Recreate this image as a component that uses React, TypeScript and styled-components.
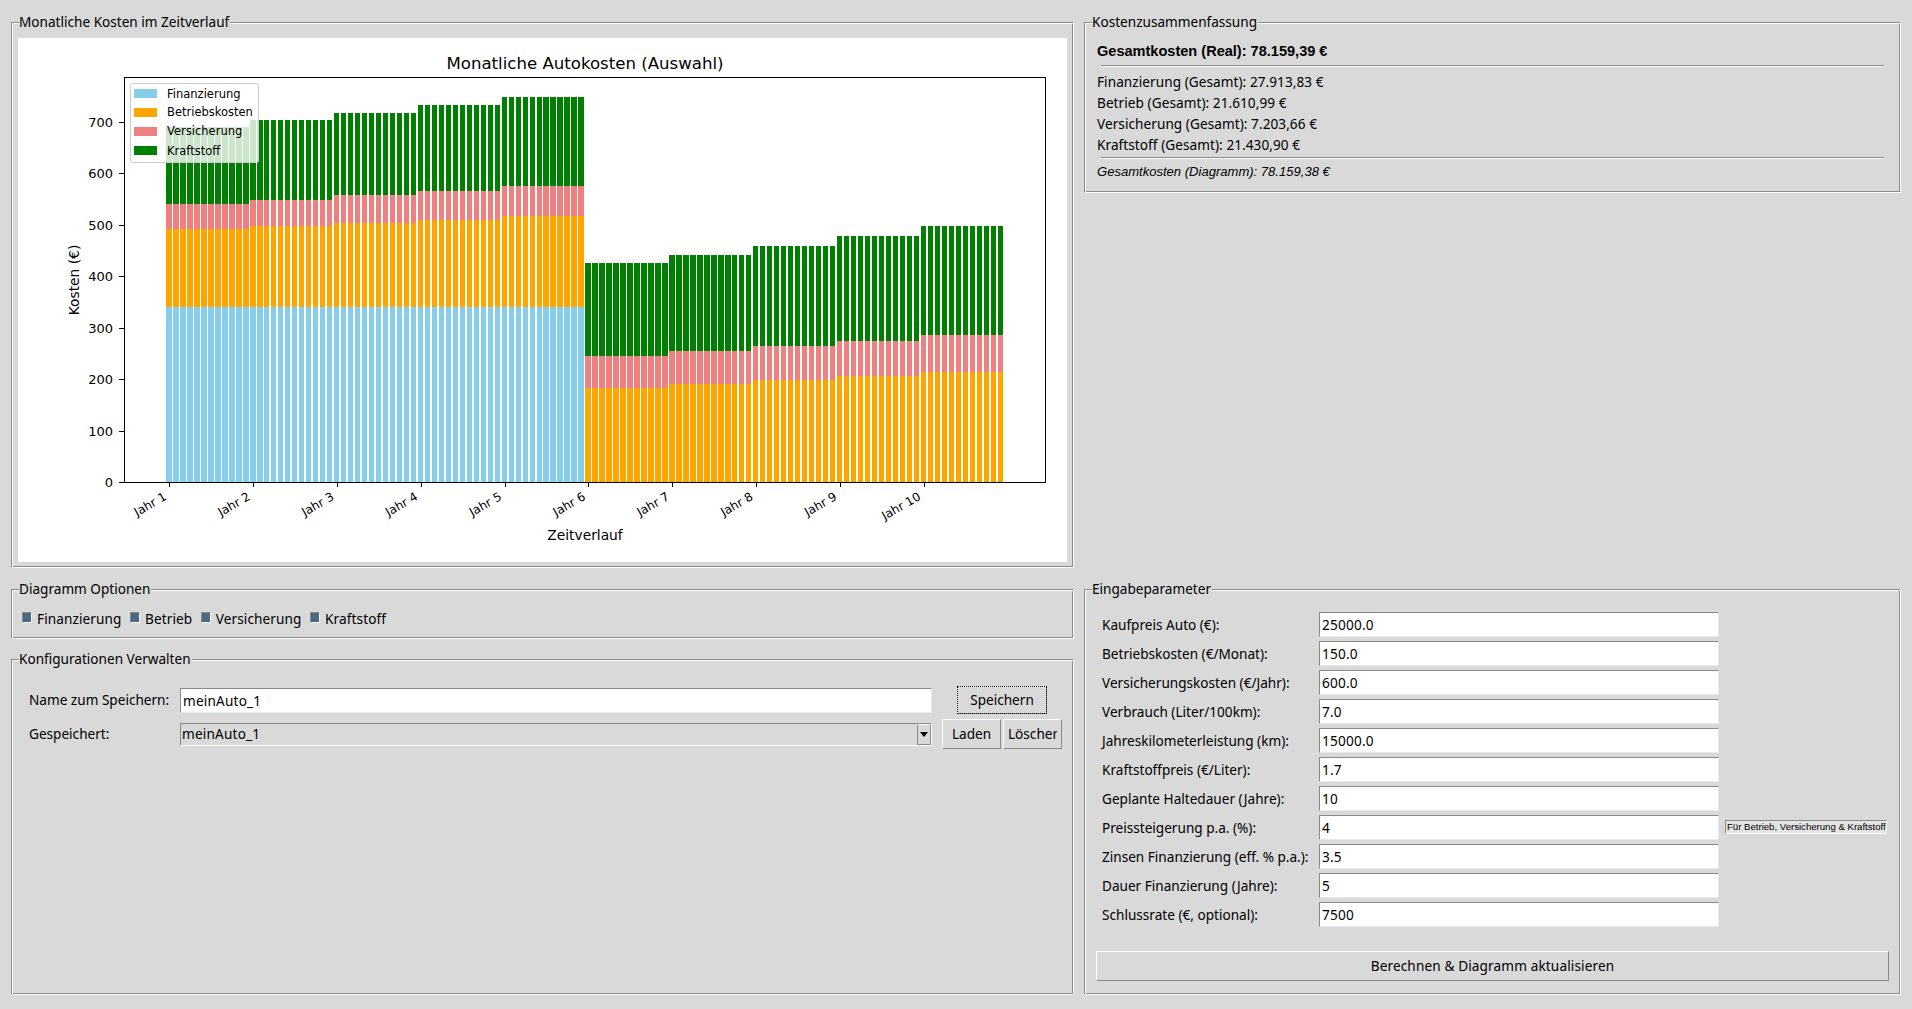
import React from "react";
import styled, { createGlobalStyle } from "styled-components";

const Global = createGlobalStyle`
  html, body { margin: 0; padding: 0; background: #d9d9d9; }
  body { font-family: "Noto Sans", "Open Sans", sans-serif; font-size: 13.6px; color: #000; }
`;

const Page = styled.div`
  display: grid;
  grid-template-columns: 1063px 817px;
  column-gap: 10px;
  padding: 22px 11px 0;
  height: 1009px;
  box-sizing: border-box;
  overflow: hidden;
`;

const Column = styled.div`
  display: flex;
  flex-direction: column;
`;

const Frame = styled.section<{ $height: number; $top?: number }>`
  position: relative;
  box-sizing: border-box;
  height: ${(p) => p.$height}px;
  margin-top: ${(p) => p.$top ?? 0}px;
  border: 1px solid;
  border-color: #8a8a8a #fff #fff #8a8a8a;
  box-shadow: inset 1px 1px 0 #fff, inset -1px -1px 0 #8a8a8a;
`;

const FrameTitle = styled.h2`
  position: absolute;
  left: 7px;
  top: -10px;
  margin: 0;
  padding: 0 1px 0 0;
  background: #d9d9d9;
  font-size: 13.6px;
  font-weight: 400;
  line-height: 18px;
  white-space: nowrap;
`;

const ChartFrame = styled(Frame)`
  display: flex;
  padding: 15px 6px 5px;
`;

const ChartCanvas = styled.svg`
  display: block;
  width: 1049px;
  height: 524px;
  background: #fff;
  font-family: "DejaVu Sans", sans-serif;
`;

const OptionsRow = styled.div`
  display: flex;
  align-items: center;
  height: 100%;
  padding: 10px 0 0 10px;
  box-sizing: border-box;
  gap: 8.5px;
`;

const CheckItem = styled.label`
  display: flex;
  align-items: center;
  gap: 5px;
  line-height: 18px;
  letter-spacing: 0.1px;
`;

const CheckBox = styled.span`
  box-sizing: border-box;
  width: 10px;
  height: 11px;
  margin-top: -4px;
  background: #4a6984;
  border: 1px solid;
  border-color: #8a8a8a #fff #fff #8a8a8a;
`;

const ConfigGrid = styled.div`
  display: grid;
  grid-template-columns: 141px 752px 120px;
  grid-template-rows: 28px 30px;
  column-gap: 10px;
  row-gap: 5px;
  align-items: center;
  padding: 26px 0 0 17px;
`;

const FieldLabel = styled.span`
  line-height: 18px;
  white-space: nowrap;
`;

const Entry = styled.div`
  box-sizing: border-box;
  height: 25px;
  padding: 0 3px 0 2px;
  background: #fff;
  border: 1px solid;
  border-color: #8a8a8a #e9e9e9 #e9e9e9 #8a8a8a;
  line-height: 23px;
  letter-spacing: 0.2px;
  white-space: nowrap;
`;

const Combo = styled.div`
  display: flex;
  box-sizing: border-box;
  height: 23px;
  background: #d9d9d9;
  border: 1px solid;
  border-color: #8a8a8a #fff #fff #8a8a8a;
`;

const ComboText = styled.span`
  flex: 1;
  padding-left: 1px;
  line-height: 20px;
  letter-spacing: 0.2px;
`;

const ComboArrow = styled.span`
  display: flex;
  align-items: center;
  justify-content: center;
  box-sizing: border-box;
  width: 14px;
  border: 1px solid;
  border-color: #fff #8a8a8a #8a8a8a #8a8a8a;
  &::after {
    content: "";
    border-left: 4px solid transparent;
    border-right: 4px solid transparent;
    border-top: 5px solid #000;
  }
`;

const Button = styled.button<{ $focused?: boolean }>`
  box-sizing: border-box;
  margin: 0;
  padding: 0;
  background: #d9d9d9;
  color: #000;
  font: inherit;
  line-height: 18px;
  border: 1px solid;
  border-color: #fff #8a8a8a #8a8a8a #fff;
  ${(p) => (p.$focused ? "outline: 1px dotted #000; outline-offset: -1px;" : "")}
`;

const SaveButton = styled(Button)`
  justify-self: center;
  width: 90px;
  height: 28px;
`;

const ButtonPair = styled.div`
  display: flex;
  gap: 2px;
`;

const SmallButton = styled(Button)`
  width: 59px;
  height: 30px;
  display: flex;
  align-items: center;
  justify-content: center;
`;

const ClippedText = styled.span`
  display: block;
  width: 49px;
  overflow: hidden;
  white-space: nowrap;
`;

const SummaryFrame = styled(Frame)`
  padding: 18px 0 0 12px;
`;

const SummaryHead = styled.div`
  font-family: "Liberation Sans", Arial, sans-serif;
  font-weight: 700;
  font-size: 14.55px;
  line-height: 20px;
`;

const Separator = styled.div<{ $gap: number }>`
  height: 1px;
  margin: ${(p) => p.$gap}px 16px ${(p) => p.$gap}px 4px;
  background: #8a8a8a;
  border-bottom: 1px solid #fff;
`;

const SummaryLine = styled.div`
  line-height: 21px;
  letter-spacing: 0.06px;
  white-space: nowrap;
`;

const SummaryNote = styled.div`
  font-family: "Liberation Sans", Arial, sans-serif;
  font-style: italic;
  font-size: 13.05px;
  line-height: 21px;
`;

const ParamsFrame = styled(Frame)`
  padding: 22px 11px 0;
`;

const ParamsGrid = styled.div`
  display: grid;
  grid-template-columns: 217px 400px auto;
  grid-auto-rows: 25px;
  row-gap: 4px;
  align-items: center;
  padding-left: 6px;
`;

const Hint = styled.span`
  justify-self: start;
  box-sizing: border-box;
  margin: -1px 0 0 6px;
  height: 14px;
  width: 162px;
  padding-left: 1px;
  background: #e3e3e3;
  border: 1px solid;
  border-color: #8a8a8a #fff #fff #8a8a8a;
  font-family: "Liberation Sans", Arial, sans-serif;
  font-size: 9.6px;
  line-height: 12px;
  white-space: nowrap;
`;

const WideButton = styled(Button)`
  display: block;
  width: 793px;
  height: 30px;
  margin-top: 24px;
  letter-spacing: 0.13px;
`;

const AxisText = styled.text`
  font-size: 13px;
  fill: #000;
`;

const AxisLabel = styled.text`
  font-size: 13.8px;
  fill: #000;
`;

const TickLabel = styled.text`
  font-size: 12px;
  fill: #000;
`;

const LegendText = styled.text`
  font-size: 11.5px;
  fill: #000;
`;

const TitleText = styled.text`
  font-size: 16.6px;
  fill: #000;
`;

const COLORS = { fin: "#87ceeb", op: "#ffa500", ins: "#f08080", fuel: "#008000" };
const PLOT = { left: 124, right: 1045, top: 77, bottom: 482 };
const FIRST_X = 169.3;
const PITCH = 6.985;
const Y_SCALE = 0.5143;

const yOf = (v: number) => PLOT.bottom - v * Y_SCALE;
const barY = (v: number) => (v === 0 ? PLOT.bottom : Math.round(481.6 - v * Y_SCALE));

const bars = Array.from({ length: 120 }, (_, m) => {
  const f = Math.pow(1.04, Math.floor(m / 12));
  const fin = m < 60 ? 340.23 : 0;
  const op = 150 * f;
  const ins = 50 * f;
  const fuel = 148.75 * f;
  return { m, fin, op, ins, fuel };
});

const Bar = ({ m, from, to, color }: { m: number; from: number; to: number; color: string }) => {
  const left = FIRST_X + m * PITCH - 3;
  const x0 = Math.round(left);
  const x1 = Math.round(left + 5.4);
  const y0 = barY(to);
  const y1 = barY(from);
  return <rect x={x0} y={y0} width={x1 - x0} height={y1 - y0} fill={color} />;
};

const Chart = () => (
  <ChartCanvas viewBox="18 38 1049 524">
    <g shapeRendering="crispEdges">
      {bars.map((b) => (
        <g key={b.m}>
          {b.fin > 0 && <Bar m={b.m} from={0} to={b.fin} color={COLORS.fin} />}
          <Bar m={b.m} from={b.fin} to={b.fin + b.op} color={COLORS.op} />
          <Bar m={b.m} from={b.fin + b.op} to={b.fin + b.op + b.ins} color={COLORS.ins} />
          <Bar m={b.m} from={b.fin + b.op + b.ins} to={b.fin + b.op + b.ins + b.fuel} color={COLORS.fuel} />
        </g>
      ))}
      <rect
        x={PLOT.left + 0.5}
        y={PLOT.top + 0.5}
        width={PLOT.right - PLOT.left}
        height={PLOT.bottom - PLOT.top}
        fill="none"
        stroke="#000"
      />
      {[0, 100, 200, 300, 400, 500, 600, 700].map((v) => (
        <line key={v} x1={119} x2={124} y1={Math.round(yOf(v)) + 0.5} y2={Math.round(yOf(v)) + 0.5} stroke="#000" />
      ))}
      {Array.from({ length: 10 }, (_, i) => {
        const x = Math.round(FIRST_X + i * 83.8) + 0.5;
        return <line key={i} x1={x} x2={x} y1={482} y2={487} stroke="#000" />;
      })}
    </g>
    {[0, 100, 200, 300, 400, 500, 600, 700].map((v) => (
      <AxisText key={v} x={113} y={yOf(v) + 5} textAnchor="end">
        {v}
      </AxisText>
    ))}
    {Array.from({ length: 10 }, (_, i) => {
      const x = FIRST_X + i * 83.8 - 2;
      return (
        <TickLabel key={i} transform={`translate(${x} 499) rotate(-30)`} textAnchor="end">
          {`Jahr ${i + 1}`}
        </TickLabel>
      );
    })}
    <TitleText x={585} y={69} textAnchor="middle">
      Monatliche Autokosten (Auswahl)
    </TitleText>
    <AxisLabel x={585} y={540} textAnchor="middle">
      Zeitverlauf
    </AxisLabel>
    <AxisLabel transform="translate(79 280) rotate(-90)" textAnchor="middle">
      Kosten (€)
    </AxisLabel>
    <rect x={130.5} y={83.5} width={128} height={79} rx={2} fill="#fff" fillOpacity={0.8} stroke="#ccc" />
    {[
      { label: "Finanzierung", color: COLORS.fin, y: 89, ty: 98 },
      { label: "Betriebskosten", color: COLORS.op, y: 108, ty: 116 },
      { label: "Versicherung", color: COLORS.ins, y: 127, ty: 135 },
      { label: "Kraftstoff", color: COLORS.fuel, y: 146, ty: 155 },
    ].map((l) => (
      <g key={l.label}>
        <rect x={134} y={l.y} width={23} height={8.5} fill={l.color} shapeRendering="crispEdges" />
        <LegendText x={167} y={l.ty}>
          {l.label}
        </LegendText>
      </g>
    ))}
  </ChartCanvas>
);

const PARAMS: [string, string][] = [
  ["Kaufpreis Auto (€):", "25000.0"],
  ["Betriebskosten (€/Monat):", "150.0"],
  ["Versicherungskosten (€/Jahr):", "600.0"],
  ["Verbrauch (Liter/100km):", "7.0"],
  ["Jahreskilometerleistung (km):", "15000.0"],
  ["Kraftstoffpreis (€/Liter):", "1.7"],
  ["Geplante Haltedauer (Jahre):", "10"],
  ["Preissteigerung p.a. (%):", "4"],
  ["Zinsen Finanzierung (eff. % p.a.):", "3.5"],
  ["Dauer Finanzierung (Jahre):", "5"],
  ["Schlussrate (€, optional):", "7500"],
];

export default function App() {
  return (
    <>
      <Global />
      <Page>
        <Column>
          <ChartFrame $height={546}>
            <FrameTitle>Monatliche Kosten im Zeitverlauf</FrameTitle>
            <Chart />
          </ChartFrame>
          <Frame $height={50} $top={21}>
            <FrameTitle>Diagramm Optionen</FrameTitle>
            <OptionsRow>
              {["Finanzierung", "Betrieb", "Versicherung", "Kraftstoff"].map((o) => (
                <CheckItem key={o}>
                  <CheckBox />
                  {o}
                </CheckItem>
              ))}
            </OptionsRow>
          </Frame>
          <Frame $height={336} $top={20}>
            <FrameTitle>Konfigurationen Verwalten</FrameTitle>
            <ConfigGrid>
              <FieldLabel>Name zum Speichern:</FieldLabel>
              <Entry>meinAuto_1</Entry>
              <SaveButton $focused>Speichern</SaveButton>
              <FieldLabel>Gespeichert:</FieldLabel>
              <Combo>
                <ComboText>meinAuto_1</ComboText>
                <ComboArrow />
              </Combo>
              <ButtonPair>
                <SmallButton>Laden</SmallButton>
                <SmallButton>
                  <ClippedText>Löschen</ClippedText>
                </SmallButton>
              </ButtonPair>
            </ConfigGrid>
          </Frame>
        </Column>
        <Column>
          <SummaryFrame $height={171}>
            <FrameTitle>Kostenzusammenfassung</FrameTitle>
            <SummaryHead>Gesamtkosten (Real): 78.159,39 €</SummaryHead>
            <Separator $gap={4} />
            <SummaryLine>Finanzierung (Gesamt): 27.913,83 €</SummaryLine>
            <SummaryLine>Betrieb (Gesamt): 21.610,99 €</SummaryLine>
            <SummaryLine>Versicherung (Gesamt): 7.203,66 €</SummaryLine>
            <SummaryLine>Kraftstoff (Gesamt): 21.430,90 €</SummaryLine>
            <Separator $gap={2} />
            <SummaryNote>Gesamtkosten (Diagramm): 78.159,38 €</SummaryNote>
          </SummaryFrame>
          <ParamsFrame $height={406} $top={396}>
            <FrameTitle>Eingabeparameter</FrameTitle>
            <ParamsGrid>
              {PARAMS.map(([label, value], i) => (
                <React.Fragment key={label}>
                  <FieldLabel>{label}</FieldLabel>
                  <Entry>{value}</Entry>
                  {i === 7 ? <Hint>Für Betrieb, Versicherung &amp; Kraftstoff</Hint> : <span />}
                </React.Fragment>
              ))}
            </ParamsGrid>
            <WideButton>Berechnen &amp; Diagramm aktualisieren</WideButton>
          </ParamsFrame>
        </Column>
      </Page>
    </>
  );
}
